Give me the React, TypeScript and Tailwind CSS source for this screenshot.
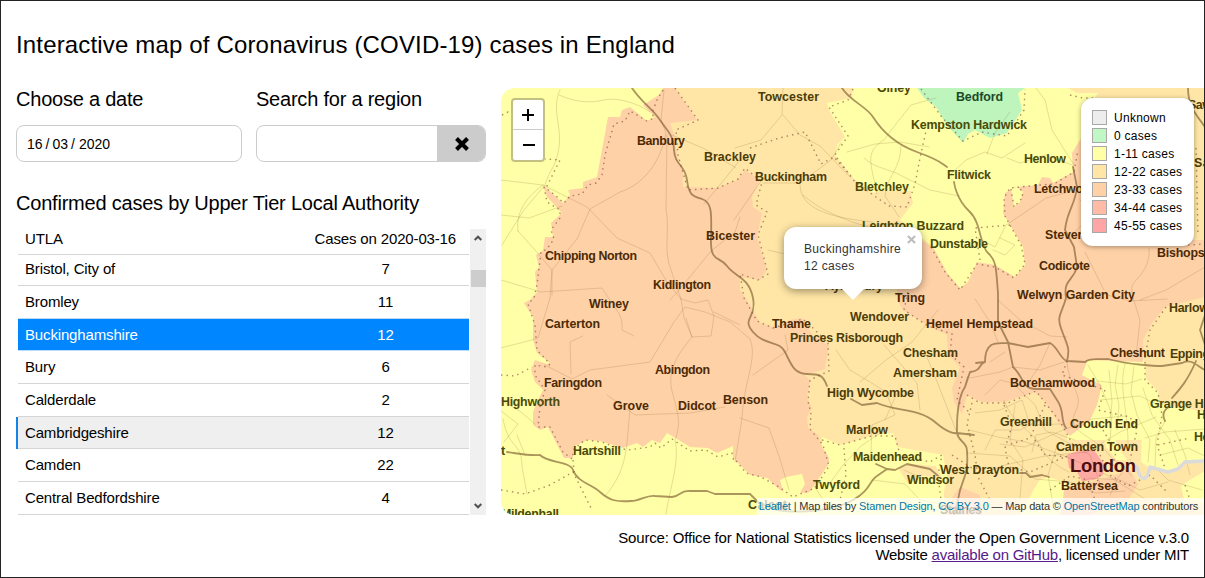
import React from "react";

type Label = [string, number, number, number, string?];

const BROWN = "#4b2a04";
const AMBER = "#4b3c08";
const OLIVE = "#4a4a08";

const labels: Label[] = [
  ["Towcester", 758, 819, 102, AMBER],
  ["Olney", 877, 911, 93, OLIVE],
  ["Bedford", 956, 1003, 102, "#1b4a2a"],
  ["Kempston Hardwick", 911, 1027, 130, OLIVE],
  ["Banbury", 637, 685, 146, BROWN],
  ["Brackley", 704, 756, 162, AMBER],
  ["Buckingham", 755, 827, 182, AMBER],
  ["Bletchley", 855, 909, 192, OLIVE],
  ["Flitwick", 947, 991, 180, OLIVE],
  ["Henlow", 1024, 1066, 164, OLIVE],
  ["Letchworth", 1034, 1099, 194, BROWN],
  ["Leighton Buzzard", 862, 964, 231, OLIVE],
  ["Dunstable", 930, 988, 249, OLIVE],
  ["Stevenage", 1045, 1106, 240, BROWN],
  ["Bicester", 706, 755, 241, BROWN],
  ["Chipping Norton", 545, 637, 261, BROWN],
  ["Kidlington", 653, 711, 290, BROWN],
  ["Witney", 589, 629, 309, BROWN],
  ["Carterton", 545, 600, 329, BROWN],
  ["Codicote", 1039, 1090, 271, BROWN],
  ["Bishops Stortford", 1157, 1259, 258, BROWN],
  ["Aylesbury", 825, 883, 291, AMBER],
  ["Tring", 895, 925, 303, BROWN],
  ["Welwyn Garden City", 1017, 1135, 300, BROWN],
  ["Harlow", 1169, 1209, 313, AMBER],
  ["Wendover", 850, 909, 322, AMBER],
  ["Thame", 772, 811, 329, BROWN],
  ["Hemel Hempstead", 926, 1033, 329, BROWN],
  ["Princes Risborough", 790, 903, 343, AMBER],
  ["Chesham", 903, 958, 358, AMBER],
  ["Cheshunt", 1110, 1165, 358, BROWN],
  ["Epping", 1170, 1210, 359, AMBER],
  ["Abingdon", 655, 710, 375, BROWN],
  ["Amersham", 893, 957, 378, AMBER],
  ["Faringdon", 544, 602, 388, BROWN],
  ["Borehamwood", 1010, 1095, 388, BROWN],
  ["High Wycombe", 827, 914, 398, AMBER],
  ["Highworth", 501, 560, 407, OLIVE],
  ["Grove", 613, 649, 411, BROWN],
  ["Didcot", 678, 716, 411, BROWN],
  ["Benson", 723, 768, 405, BROWN],
  ["Grange Hill", 1150, 1213, 409, OLIVE],
  ["Ha", 1197, 1213, 420, OLIVE],
  ["Greenhill", 1000, 1052, 427, AMBER],
  ["Crouch End", 1070, 1138, 429, AMBER],
  ["Marlow", 846, 888, 435, AMBER],
  ["Hornchurch", 1194, 1260, 442, OLIVE],
  ["Camden Town", 1056, 1138, 452, AMBER],
  ["Hartshill", 573, 621, 456, OLIVE],
  ["Maidenhead", 853, 922, 462, OLIVE],
  ["West Drayton", 940, 1019, 475, AMBER],
  ["Windsor", 907, 954, 485, OLIVE],
  ["Twyford", 813, 860, 490, OLIVE],
  ["Battersea", 1061, 1118, 491, BROWN],
  ["Mildenhall", 501, 559, 519, OLIVE],
  ["Calcot", 748, 787, 510, OLIVE],
  ["Staines", 940, 982, 515, AMBER],
  ["t", 501, 505, 456, OLIVE],
  ["Saffron", 1194, 1240, 168, AMBER],
  ["Saw", 1188, 1212, 110, AMBER],
];

const oxfordshire =
  "663,88 659,95 643,105 655,117 647,121 630,107 622,110 620,117 608,117 597,177 583,182 583,188 568,190 570,195 563,203 543,185 547,197 562,213 551,223 553,237 545,237 543,250 536,255 539,267 535,272 537,292 530,300 524,303 533,317 533,340 537,353 550,363 547,364 535,360 531,370 535,382 543,390 537,402 533,412 533,425 540,430 548,427 564,458 573,458 573,447 587,440 600,441 623,448 637,443 643,447 652,440 660,443 667,433 677,439 690,447 708,448 717,453 733,446 733,458 750,475 767,478 780,490 793,497 810,492 827,468 830,458 822,447 818,435 808,428 807,417 812,408 807,398 810,380 805,375 825,369 829,345 812,335 807,325 802,318 790,320 773,327 760,323 750,305 740,290 740,277 760,280 767,270 757,237 762,213 753,207 752,197 760,180 745,170 737,180 717,188 683,187 683,170 677,157 675,137 670,123 697,120 675,88";

const amberWest =
  "675,88 853,88 852,98 827,103 830,112 845,137 837,145 835,155 853,178 873,193 885,192 910,192 913,203 900,220 933,247 947,273 960,288 965,380 1067,380 1067,440 1205,440 1205,515 940,515 947,475 943,455 897,447 893,433 877,435 840,445 822,437 822,447 800,440 800,380 740,340 735,270 745,200 680,195 665,120";

const herts =
  "897,227 933,247 947,273 960,288 968,282 977,262 995,265 1015,277 1025,265 1023,247 1003,213 1005,193 1015,187 1038,185 1042,177 1050,178 1053,183 1073,172 1072,153 1080,140 1205,140 1205,298 1165,308 1152,325 1145,338 1143,362 1088,360 1082,375 1102,385 1097,405 1090,420 1070,436 1060,425 1045,402 1035,392 1005,402 982,402 967,395 962,414 954,402 952,388 960,367 948,355 947,335 927,325 903,310 897,300";

const boundaries = [
  "M663,90 L657,100 L652,113 L654,118 L647,121 L630,111 L625,121 L614,124 L605,155 L602,175 L596,183 L588,185 L582,194 L570,196 L564,203 L556,196 L546,188 L560,160 L545,159",
  "M544,187 L547,202 L560,210 L560,218 L551,230 L554,239 L547,249 L541,252 L537,285 L534,298 L528,304 L535,325 L537,350 L550,364 L547,367 L535,365 L535,375 L545,390 L540,407 L538,427 L550,427 L563,452 L572,459 L574,449 L585,440 L602,442 L615,447 L628,450 L650,447 L655,443 L661,448 L672,439 L690,451 L706,450 L718,457 L732,453 L734,462",
  "M675,88 L698,120 L676,130 L678,155 L684,176 L688,190 L718,188 L738,179 L745,168 L762,182 L756,205 L767,212 L758,235 L768,274 L758,280 L740,274 L744,298 L757,321 L773,328 L803,319 L813,328 L828,343 L829,371 L810,380 L808,401 L811,414 L810,429 L823,445 L829,466 L815,488 L793,497 L779,487 L761,477 L746,473 L734,458",
  "M750,148 L779,138 L805,132 L821,164 L834,157 L851,176",
  "M853,89 L848,100 L829,107 L848,136 L835,155 L855,182 L876,197 L889,206 L907,207 L915,184 L920,158 L926,131",
  "M921,89 L941,116 L963,141 L982,132 L1007,136 L1024,110 L1025,89",
  "M931,247 L945,272 L960,290 L977,264 L995,267 L1014,278 L1025,264 L1021,245 L1005,216 L1004,198 L1010,188 L1040,185 L1054,184 L1074,172 L1078,150",
  "M980,260 L975,228 L1010,225 M1070,95 L1083,98 L1097,98 M1011,189 L1014,207 L1023,197 L1020,187",
  "M909,287 L904,310 L928,326 L952,334 L950,354 L964,367 L957,400 L970,413",
  "M1166,307 L1150,330 L1145,357 L1145,380 L1158,393 L1162,415 L1157,445 L1165,468",
  "M967,395 L980,403 L1008,403 L1036,391 L1061,423 L1073,445 L1097,449 L1105,465 L1095,486",
  "M972,403 L967,424 L975,455 L978,477 L990,500 M1004,405 L1012,426 L1005,448 L1009,467 L1030,472 L1067,456",
  "M1067,361 L1062,375 L1105,390 L1098,410 L1130,417 L1137,430 L1130,460",
  "M1045,405 L1030,438 L1008,445 M1035,440 L1045,455 L1069,457 M1050,490 L1070,476 L1088,480 L1095,500",
  "M1103,430 L1116,452 L1110,475 L1128,486 L1150,475 L1168,493 M1185,485 L1190,500 M1158,445 L1190,438",
  "M822,440 L840,445 L872,436 L895,436 L900,455 L930,462 L942,455 L938,475 L941,500 M844,448 L846,475 L840,500",
  "M501,375 L515,376 L532,367 M501,490 L525,494 L550,485 L573,472 L592,510 M573,460 L574,472",
  "M502,115 L508,112 L513,116 M1196,148 L1198,236 M1188,245 L1205,244 M952,455 L975,470",
];

const motorways = [
  "M632,88 C642,103 652,108 660,120 S673,134 674,150 S685,164 687,180 S693,196 702,199 S712,210 711,237 S719,255 727,266 S749,277 753,298 S741,318 753,332 S779,340 785,352 S794,374 807,374 S823,375 827,386",
  "M851,399 L862,405 L877,403 C897,412 919,408 935,422 S956,433 970,434",
  "M842,88 C850,101 866,106 873,117 S892,143 917,152 S941,163 947,167 M954,182 S956,199 969,211 S979,245 988,253 S996,270 998,293 L998,322 L1008,342 L1013,367 C1024,377 1022,389 1036,389 L1050,389 L1057,400 C1065,411 1060,420 1066,428",
  "M965,387 L970,372 C982,371 979,363 985,362 C985,338 1001,344 1008,343 L1028,347 L1050,343 C1058,347 1060,359 1067,361 L1085,362 C1090,357 1100,360 1108,359 C1130,365 1157,366 1162,366 L1182,363 C1190,358 1196,365 1205,370",
  "M968,377 L965,387 C956,400 957,430 957,433 C959,443 967,441 967,451 C969,480 961,477 958,500 L954,515",
  "M985,362 L976,363 M957,433 L974,435",
  "M1073,167 L1077,187 C1075,206 1067,210 1065,230 L1074,247 L1077,267 C1073,282 1063,279 1066,298 C1061,316 1056,315 1062,331 S1070,348 1067,361",
  "M1188,88 C1188,107 1196,114 1205,127 M1205,315 L1200,330 L1205,345 M1196,361 C1187,382 1179,390 1172,398 M1169,407 C1162,411 1163,417 1165,421",
  "M507,452 C521,454 529,456 540,455 C548,463 570,461 573,470 C577,482 593,485 600,492 C610,501 617,502 631,501 C640,501 646,495 655,496 L672,497 C681,496 680,490 690,491 L707,491 L715,494 L750,494 L758,502 L777,510 C802,514 836,510 853,500 C870,491 869,481 877,476 L887,469 L895,470 L907,464 L930,469 L937,475 M876,464 L887,469",
  "M1020,473 L1026,473 L1030,477 L1042,475 L1049,477",
];

const minorRoads = [
  "M560,90 C551,109 562,126 559,147 S550,168 545,185 L524,210 L502,245 M559,95 C573,101 587,104 604,100 S646,108 650,112",
  "M501,180 L543,185 L587,207 L617,238 L650,253 L667,282 L681,299 L684,318 L692,337 C678,354 667,370 672,391 S682,421 675,440 C680,462 670,487 666,514",
  "M664,90 L661,120 L666,133 C660,166 640,186 620,192 L590,209 L577,239 L552,270 L550,298 M667,135 L666,209 C670,230 663,250 671,270 L681,299",
  "M501,215 L529,218 L562,206 M518,231 C515,208 532,193 543,185 M518,231 L535,250 L552,270 L552,295 M501,280 L528,288 L541,292 L602,288 C617,312 623,314 622,330 L634,336",
  "M550,298 L538,338 C515,345 502,347 501,348 M571,374 L570,342 L583,336 M545,365 L572,379 L590,370 L650,362 L665,337 L674,322 L685,307 L705,312 L730,322 L750,339",
  "M681,299 L695,303 L708,300 L714,316 L711,336 L692,337 L686,318 M714,312 L740,325",
  "M711,251 L680,289 L670,300 M711,251 L735,232 L740,217 M704,204 L724,180 L740,160 M672,135 L705,149 L736,168",
  "M783,88 L782,115 L761,140 L735,148 M783,115 L800,135 L820,146 L850,177 M761,181 L734,220 M763,183 L800,183 L831,160 L841,143",
  "M803,195 C819,210 849,224 900,235 M768,250 L785,254 M800,185 C800,210 833,218 873,222",
  "M847,152 L875,144 L900,142 L929,147 M864,158 C875,168 885,168 898,174 L930,190 L959,196 M877,194 C871,163 864,152 884,140 L896,124 L911,105 L936,98",
  "M901,146 C900,171 887,175 885,196 L899,217 M951,174 L966,160 L985,152 L1002,158 L1025,143 M987,154 L995,133 L1010,112 M1036,88 L1045,100 L1052,130 L1074,165",
  "M978,238 L995,247 L1006,225 L1033,207 L1046,198 L1065,193 M1000,238 L1015,245 L1005,255 L993,250 M1007,158 L1020,163 L1045,155 L1072,165",
  "M1085,252 L1100,282 L1104,290 M1149,248 C1151,268 1137,278 1133,284 S1136,306 1140,320 L1136,357 M1080,200 L1092,214 L1076,231 M1172,252 L1195,260",
  "M1140,300 L1166,290 L1205,267 M1067,300 L1096,292 L1130,301 L1167,299 M998,300 L1020,320 L1050,336 L1067,337 M975,299 L990,322 L998,342",
  "M836,350 L850,370 L870,382 L886,392 L895,415 L872,425 L871,452 M860,382 L886,360 L912,342 L938,310 M884,345 L917,383 L920,410 M925,352 L938,384 L957,433",
  "M750,339 C758,358 744,380 742,418 L735,462 M740,418 L769,428 L780,459 L789,490 M753,375 L788,350 L785,335 M607,395 L635,415 L690,413 L725,407 M630,410 C626,446 629,467 606,495",
  "M501,400 L521,412 L535,424 M503,419 C509,451 522,441 522,467 L527,494 M504,442 L518,424 L501,411 M517,435 L525,455",
  "M825,490 L843,465 L861,446 L880,433 M885,420 L897,393 M904,470 L930,482 M872,480 L905,484 L920,500 L955,507 M830,510 L814,486",
];

const cityRoads = [
  "M969,430 L998,437 L1026,442 L1067,457 L1107,475 L1145,499 M980,474 L1005,465 L1045,456 L1087,452 L1120,432 L1156,417",
  "M1004,400 C1010,422 1035,433 1040,445 S1055,465 1069,472 M1010,380 L1035,405 L1045,430 L1090,455 L1102,489",
  "M1067,361 C1069,390 1085,393 1075,413 S1098,437 1109,455 L1132,476 M1088,365 L1100,385 L1112,414 L1110,440",
  "M1109,370 L1112,402 L1110,420 M1125,364 C1118,390 1129,410 1128,450 M1100,400 L1140,396 L1158,405 M1097,381 L1126,384 L1142,379",
  "M1165,421 L1156,438 L1155,467 L1168,480 L1202,490 M1145,438 L1165,432 L1205,429 M1160,455 L1188,448 L1205,456 M1175,430 L1185,455 L1190,475",
  "M967,453 L1010,456 L1035,479 L1070,482 L1096,493 L1125,491 M1015,405 L1010,440 L1023,460 L1020,499 M1057,445 L1048,475 L1053,505",
  "M975,413 L1000,410 L1022,400 L1030,425 L1060,424 M1000,444 L1025,447 L1063,430 L1092,419 L1126,416",
  "M970,378 L1000,372 L1013,367 L1040,370 L1067,361 M985,395 L1000,380 L1020,385 M1028,383 L1040,365 L1050,343 M990,362 L1005,352",
  "M1118,365 L1115,385 L1119,405 L1117,430 M1134,366 L1131,392 L1137,415 L1150,440 L1148,462 M1143,388 L1152,415 L1170,440 L1178,465",
  "M985,450 L995,430 L1020,430 L1042,418 M1032,452 L1036,435 L1052,432 L1075,440 M1075,486 L1090,478 L1120,480 L1140,490 L1168,482 M1110,495 L1118,478 L1130,462",
];

const joined = (p: string[]) => p.join(" ");

function MapDrawing() {
  return (
    <svg viewBox="501 88 703 427" className="block h-full w-full">
      <rect x="501" y="88" width="703" height="427" fill="#ffffa7" />
      <polygon points={amberWest} fill="#ffe6a6" />
      <polygon points="1068,88 1205,88 1205,245 1080,245 1080,140 1090,105 1098,93 1077,93" fill="#ffe6a6" />
      <polygon points={oxfordshire} fill="#ffd1a7" />
      <polygon points={herts} fill="#ffd1a7" />
      <polygon points="1193,88 1205,88 1205,240 1193,240" fill="#ffe6a6" />
      <polygon points="875,191 911,191 912,205 905,207 889,206" fill="#ffe6a6" />
      <polygon points="1205,297 1165,307 1152,323 1143,340 1145,377 1158,392 1156,420 1205,420" fill="#ffe6a6" />
      <polygon points="1088,360 1145,365 1146,384 1157,390 1160,404 1182,408 1205,412 1205,462 1185,463 1168,472 1150,468 1141,462 1142,425 1132,409 1098,406 1102,385 1082,375" fill="#ffffa7" />
      <polygon points="1100,425 1112,425 1117,446 1127,460 1117,460 1106,447" fill="#ffffa7" />
      <polygon points="917,88 924,98 936,107 946,124 963,143 968,134 975,130 990,138 1007,133 1022,110 1018,93 1025,88" fill="#bdf5bd" />
      <polygon points="1011,189 1014,207 1020,202 1023,192 1017,187" fill="#ffffa7" />
      <polygon points="780,480 786,477 802,474 805,484 798,496 784,494" fill="#ffffa7" />
      <polygon points="822,437 840,445 877,435 893,433 897,447 943,455 943,477 945,515 738,515 740,470 780,492 809,493 830,462" fill="#ffffa7" />
      <polygon points="898,468 910,464 936,466 942,478 920,476 908,484" fill="#ffe6a6" />
      <polygon points="1033,491 1039,481 1047,477 1066,482 1068,496 1058,515 1021,515" fill="#ffffa7" />
      <polygon points="1105,478 1130,470 1138,484 1128,500 1090,515 1061,515 1064,490" fill="#ffd1a7" />
      <polygon points="1067,455 1080,450 1094,450 1104,464 1103,475 1094,480 1082,481 1077,472 1069,468" fill="#ffa9a3" />
      <polygon points="953,496 960,487 980,495 982,515 948,515" fill="#ffd1a7" />
      <polygon points="1205,471 1193,478 1181,486 1184,500 1205,504" fill="#ffffa7" />
      <g fill="none" stroke="#775420" strokeLinejoin="round" strokeLinecap="round">
        <path d={joined(minorRoads)} strokeOpacity=".19" strokeWidth="1" />
        <path d={joined(cityRoads)} strokeOpacity=".18" strokeWidth="1" />
        <path d={joined(boundaries)} stroke="#7c4834" strokeOpacity=".62" strokeWidth="1.4" strokeLinecap="butt" strokeDasharray="1.5 4" />
        <path d={joined(motorways)} stroke="#76562c" strokeOpacity=".62" strokeWidth="1.8" />
      </g>
      <path d="M1136,465 L1140,476 Q1145,482 1148,474 L1150,467 L1168,472 L1178,469 L1185,462 L1205,461" fill="none" stroke="#dcdbdc" strokeWidth="3.4" strokeLinejoin="round" />
      <g fontFamily="Liberation Sans, Arial, sans-serif" fontWeight="700" fontSize="12.4">
        {labels.map(([text, start, end, y, color]) => (
          <text key={text + start} x={start} y={y - 1} textLength={end - start} fill={color}>
            {text}
          </text>
        ))}
        <text x="1070" y="472" fontSize="18.4" textLength="66" fill="#4b0d10">London</text>
      </g>
    </svg>
  );
}

const rows: [string, number, string][] = [
  ["Bristol, City of", 7, "h-[31px] border-[#d5d5d5] pb-0.5"],
  ["Bromley", 11, "h-[33px] border-[#b9d9f3]"],
  ["Buckinghamshire", 12, "h-8 border-[#b9dcff] bg-[#0086ff] pt-px text-white"],
  ["Bury", 6, "h-[33px] border-[#d5d5d5]"],
  ["Calderdale", 2, "h-[33px] border-[#d5d5d5]"],
  ["Cambridgeshire", 12, "h-8 border-[#d5d5d5] bg-[#efefef] pt-px shadow-[-2px_0_0_#1483e8]"],
  ["Camden", 22, "h-[33px] border-[#d5d5d5]"],
  ["Central Bedfordshire", 4, "h-[33px] border-[#d5d5d5]"],
];

const legend: [string, string][] = [
  ["Unknown", "bg-[#ededed]"],
  ["0 cases", "bg-[#c0f7c4]"],
  ["1-11 cases", "bg-[#ffffa7]"],
  ["12-22 cases", "bg-[#ffe6a6]"],
  ["23-33 cases", "bg-[#ffd1a7]"],
  ["34-44 cases", "bg-[#ffbba6]"],
  ["45-55 cases", "bg-[#ffa5a6]"],
];

function Chevron({ down }: { down?: boolean }) {
  return (
    <svg viewBox="0 0 8 6" className="h-1.5 w-2" fill="none" stroke="#505050" strokeWidth="2">
      <path d={down ? "M.7 1 4 4.3 7.3 1" : "M.7 5 4 1.7 7.3 5"} />
    </svg>
  );
}

function CaseTable() {
  return (
    <div className="mt-[13px] flex h-[286px] w-[470px] justify-between">
      <div className="ml-0.5 w-[451px] text-[15px] leading-5 tracking-[-0.15px]">
        <div className="flex h-[26px] items-center justify-between border-b border-[#d5d5d5] pr-[13px] pb-[5px] pl-[7px]">
          <span>UTLA</span>
          <span>Cases on 2020-03-16</span>
        </div>
        {rows.map(([name, cases, style]) => (
          <div key={name} className={"flex items-center justify-between border-b pr-[13px] pl-[7px] " + style}>
            <span>{name}</span>
            <span className="w-[141px] text-center">{cases}</span>
          </div>
        ))}
      </div>
      <div className="flex w-4 flex-col items-center bg-[#f0f0f0] py-1.5">
        <Chevron />
        <div className="mt-[29px] h-[17px] w-[15px] bg-[#cdcdcd]" />
        <div className="grow" />
        <Chevron down />
      </div>
    </div>
  );
}

function MapPanel() {
  return (
    <div className="relative mt-[2px] h-[427px] w-[703px] shrink-0 overflow-hidden rounded-l-[14px]">
      <MapDrawing />
      <div className="absolute top-[10px] left-[10px] flex w-[34px] flex-col rounded border-2 border-[#c3c083] bg-white">
        <button className="flex h-[30px] items-center justify-center border-b border-[#ccc]" aria-label="+">
          <svg viewBox="0 0 12 12" className="h-3 w-3" stroke="black" strokeWidth="2"><path d="M0 6H12M6 0V12" /></svg>
        </button>
        <button className="flex h-[30px] items-center justify-center" aria-label="−">
          <svg viewBox="0 0 12 12" className="ml-px h-3 w-3" stroke="black" strokeWidth="2"><path d="M0 6H12" /></svg>
        </button>
      </div>
      <div className="absolute top-[139px] left-[283px] h-[62px] w-[138px] rounded-xl bg-white pt-[14px] pl-5 text-[12px] leading-[17px] tracking-[0.33px] text-[#333] shadow-[0_2px_8px_rgba(0,0,0,.4)]">
        <div>Buckinghamshire</div>
        <div>12 cases</div>
        <svg viewBox="0 0 10 10" className="absolute top-2 right-[6px] h-[9px] w-[9px]" stroke="#bdbdbd" strokeWidth="2.3">
          <path d="M1 1 9 9M9 1 1 9" />
        </svg>
        <svg viewBox="0 0 24 12" className="absolute top-[61px] left-[57px] h-3 w-6" fill="white"><path d="M0 0H24L12 12Z" /></svg>
      </div>
      <div className="absolute top-[10px] left-[580px] flex h-[148px] w-[113px] flex-col gap-[3px] rounded-xl bg-white pt-3 pl-[11px] text-[12px] leading-[15px] tracking-[0.27px] shadow-[0_1px_5px_rgba(0,0,0,.35)]">
        {legend.map(([name, color]) => (
          <div key={name} className="flex items-center gap-[7px]">
            <span className={"h-[15px] w-[15px] border border-[#a8a8a8] " + color} />
            <span className="translate-y-px">{name}</span>
          </div>
        ))}
      </div>
      <div className="absolute right-0 bottom-0 flex h-[17px] w-[447px] items-center justify-end bg-white/70 pr-[6px] text-[11px] tracking-[-0.15px] whitespace-pre text-[#333]">
        <span className="text-[#0078a8]">Leaflet</span><span> | Map tiles by </span><span className="text-[#0078a8]">Stamen Design</span><span>, </span><span className="text-[#0078a8]">CC BY 3.0</span><span> — Map data © </span><span className="text-[#0078a8]">OpenStreetMap</span><span> contributors</span>
      </div>
    </div>
  );
}

export default function App() {
  return (
    <main className="h-[578px] w-[1205px] overflow-hidden border border-[#242424] bg-white font-['Liberation_Sans',Arial,sans-serif] text-black">
      <h1 className="mt-[29px] ml-[15px] text-[24px] leading-[30px] tracking-[0.16px]">Interactive map of Coronavirus (COVID-19) cases in England</h1>
      <div className="mt-[26px] flex">
        <section className="w-[500px] shrink-0 pl-[15px]">
          <div className="flex gap-[14px]">
            <div className="w-[226px]">
              <h2 className="text-[20px] leading-[26px] tracking-[-0.22px]">Choose a date</h2>
              <div className="mt-[13px] flex h-[37px] items-center rounded-lg border border-[#ccc] pt-0.5 pl-[10px] text-[14px]">
                <span>16</span><span className="mx-[3px]">/</span><span>03</span><span className="mx-[3px]">/</span><span className="ml-px">2020</span>
              </div>
            </div>
            <div className="w-[230px]">
              <h2 className="text-[20px] leading-[26px] tracking-[-0.22px]">Search for a region</h2>
              <div className="mt-[13px] flex h-[37px] overflow-hidden rounded-lg border border-[#ccc]">
                <input className="w-[180px] outline-none" aria-label="Search for a region" />
                <button className="flex grow items-center justify-center bg-[#ccc]" aria-label="Clear">
                  <svg viewBox="0 0 14 14" className="ml-0.5 h-[14px] w-[14px]" stroke="black" strokeWidth="4"><path d="M1.5 1.5 12.5 12.5M12.5 1.5 1.5 12.5" /></svg>
                </button>
              </div>
            </div>
          </div>
          <h2 className="mt-[28px] text-[20px] leading-[26px] tracking-[-0.21px]">Confirmed cases by Upper Tier Local Authority</h2>
          <CaseTable />
        </section>
        <MapPanel />
      </div>
      <footer className="mt-[14px] pr-[15px] text-right text-[15px] leading-[17px] tracking-[-0.17px]">
        <p>Source: Office for National Statistics licensed under the Open Government Licence v.3.0</p>
        <p className="tracking-[-0.24px]">Website <a className="text-[#551a8b] underline">available on GitHub</a>, licensed under MIT</p>
      </footer>
    </main>
  );
}
